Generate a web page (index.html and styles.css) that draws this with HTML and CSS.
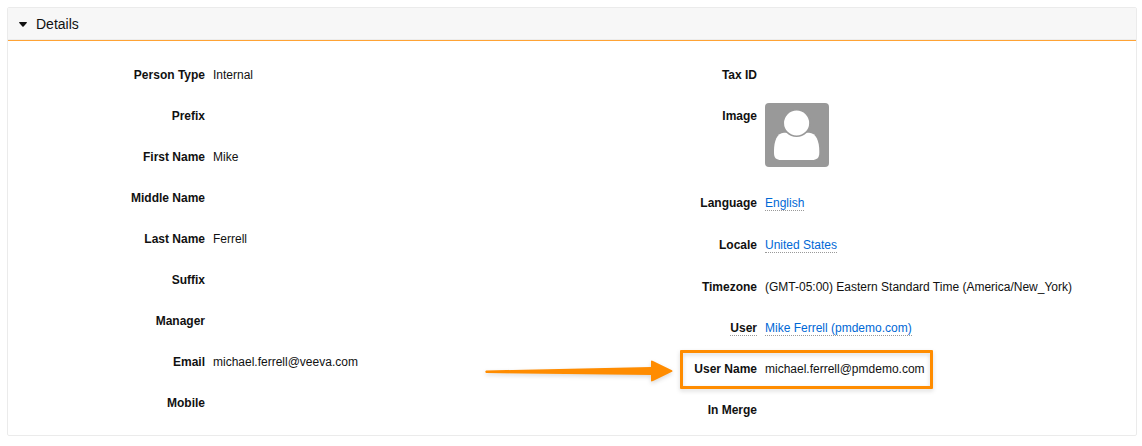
FILE: index.html
```html
<!DOCTYPE html>
<html lang="en">
<head>
<meta charset="utf-8">
<title>Details</title>
<link rel="stylesheet" href="styles.css">
</head>
<body>
<section class="panel">
  <h2 class="panel-header">
    <button class="toggle" type="button" aria-expanded="true">
      <svg class="caret" viewBox="0 0 8 5" aria-hidden="true"><path d="M0.6 0H7.4Q8.3 0.1 7.7 0.9L4.6 4.5Q4 5.1 3.4 4.5L0.3 0.9Q-0.3 0.1 0.6 0Z"/></svg>
      Details
    </button>
  </h2>
  <div class="panel-body">
    <dl class="fields">
      <div class="row"><dt>Person Type</dt><dd>Internal</dd></div>
      <div class="row"><dt>Prefix</dt><dd></dd></div>
      <div class="row"><dt>First Name</dt><dd>Mike</dd></div>
      <div class="row"><dt>Middle Name</dt><dd></dd></div>
      <div class="row"><dt>Last Name</dt><dd>Ferrell</dd></div>
      <div class="row"><dt>Suffix</dt><dd></dd></div>
      <div class="row"><dt>Manager</dt><dd></dd></div>
      <div class="row"><dt>Email</dt><dd>michael.ferrell@veeva.com</dd></div>
      <div class="row"><dt>Mobile</dt><dd></dd></div>
    </dl>
    <dl class="fields">
      <div class="row"><dt>Tax ID</dt><dd></dd></div>
      <div class="row"><dt>Image</dt><dd>
        <svg class="avatar" viewBox="0 0 64 64" role="img" aria-label="User image">
          <rect width="64" height="64" rx="4" fill="#999"/>
          <path d="M19 29.700H44C51 30 54.300 38 54.300 48V50C54.300 55 51.500 57 47 57H16C11.500 57 9 55 9 50V48C9 38 12 30 19 29.700Z" fill="#fff"/>
          <circle cx="31.600" cy="20" r="13.300" fill="#fff" stroke="#999" stroke-width="1.500"/>
        </svg>
      </dd></div>
      <div class="row row-tall"><dt>Language</dt><dd><a href="#">English</a></dd></div>
      <div class="row row-tall"><dt>Locale</dt><dd><a href="#">United States</a></dd></div>
      <div class="row"><dt>Timezone</dt><dd>(GMT-05:00) Eastern Standard Time (America/New_York)</dd></div>
      <div class="row"><dt><span class="hint">User</span></dt><dd><a href="#">Mike Ferrell (pmdemo.com)</a></dd></div>
      <div class="row row-marked"><dt>User Name</dt><dd>michael.ferrell@pmdemo.com</dd>
        <dd class="marker" aria-hidden="true">
          <svg class="arrow" viewBox="0 0 188 22"><path d="M1 10.500L166 7V1.500Q166 0 168 1L187 10.200Q188 11 187 11.800L168 21Q166 22 166 20.500V15L1 13Q-0.500 11.800 1 10.500Z"/></svg>
        </dd>
      </div>
      <div class="row"><dt>In Merge</dt><dd></dd></div>
    </dl>
  </div>
</section>
</body>
</html>
```
FILE: styles.css
```css
* { box-sizing: border-box; }
body {
  margin: 7px 5px 10px 7px;
  background: #fff;
  color: #111;
  font: 12px/16px "Liberation Sans", Arial, sans-serif;
}
.panel { border: 1px solid #ebebeb; border-radius: 2px; }
.panel-header {
  margin: 0;
  background: #f7f7f7;
  border-bottom: 1px solid #ffa335;
  box-shadow: inset 0 -1px #ececec;
}
.toggle {
  display: flex;
  align-items: center;
  gap: 9px;
  width: 100%;
  padding: 8px 11px;
  border: 0;
  background: none;
  color: inherit;
  font: 14px/16px "Liberation Sans", Arial, sans-serif;
  cursor: pointer;
}
.caret { width: 8px; height: 5px; fill: #111; }
.panel-body {
  display: grid;
  grid-template-columns: 1fr 1fr;
  padding: 14px 24px 4px 0;
}
.fields { margin: 0; }
.row {
  display: grid;
  grid-template-columns: 197px 1fr;
  column-gap: 8px;
  padding: 12px 0 13px;
}
.row-tall { padding-bottom: 14px; }
dt { font-weight: bold; text-align: right; }
dd { margin: 0; white-space: nowrap; }
a { color: #0068d6; text-decoration: none; }
a, .hint { border-bottom: 1px dotted #999; }
.avatar {
  display: block;
  width: 64px;
  height: 64px;
  margin: -5px 0 3px;
}
.row-marked { position: relative; }
.marker {
  position: absolute;
  top: 1px;
  bottom: 1px;
  left: 120px;
  width: 253px;
  border: 3px solid #ff8c00;
  border-radius: 1px;
  filter: drop-shadow(0 2px 2px rgba(0, 0, 0, 0.15));
  pointer-events: none;
}
.arrow {
  position: absolute;
  top: 7px;
  right: 257px;
  width: 188px;
  height: 22px;
  fill: #ff8c00;
}
```
